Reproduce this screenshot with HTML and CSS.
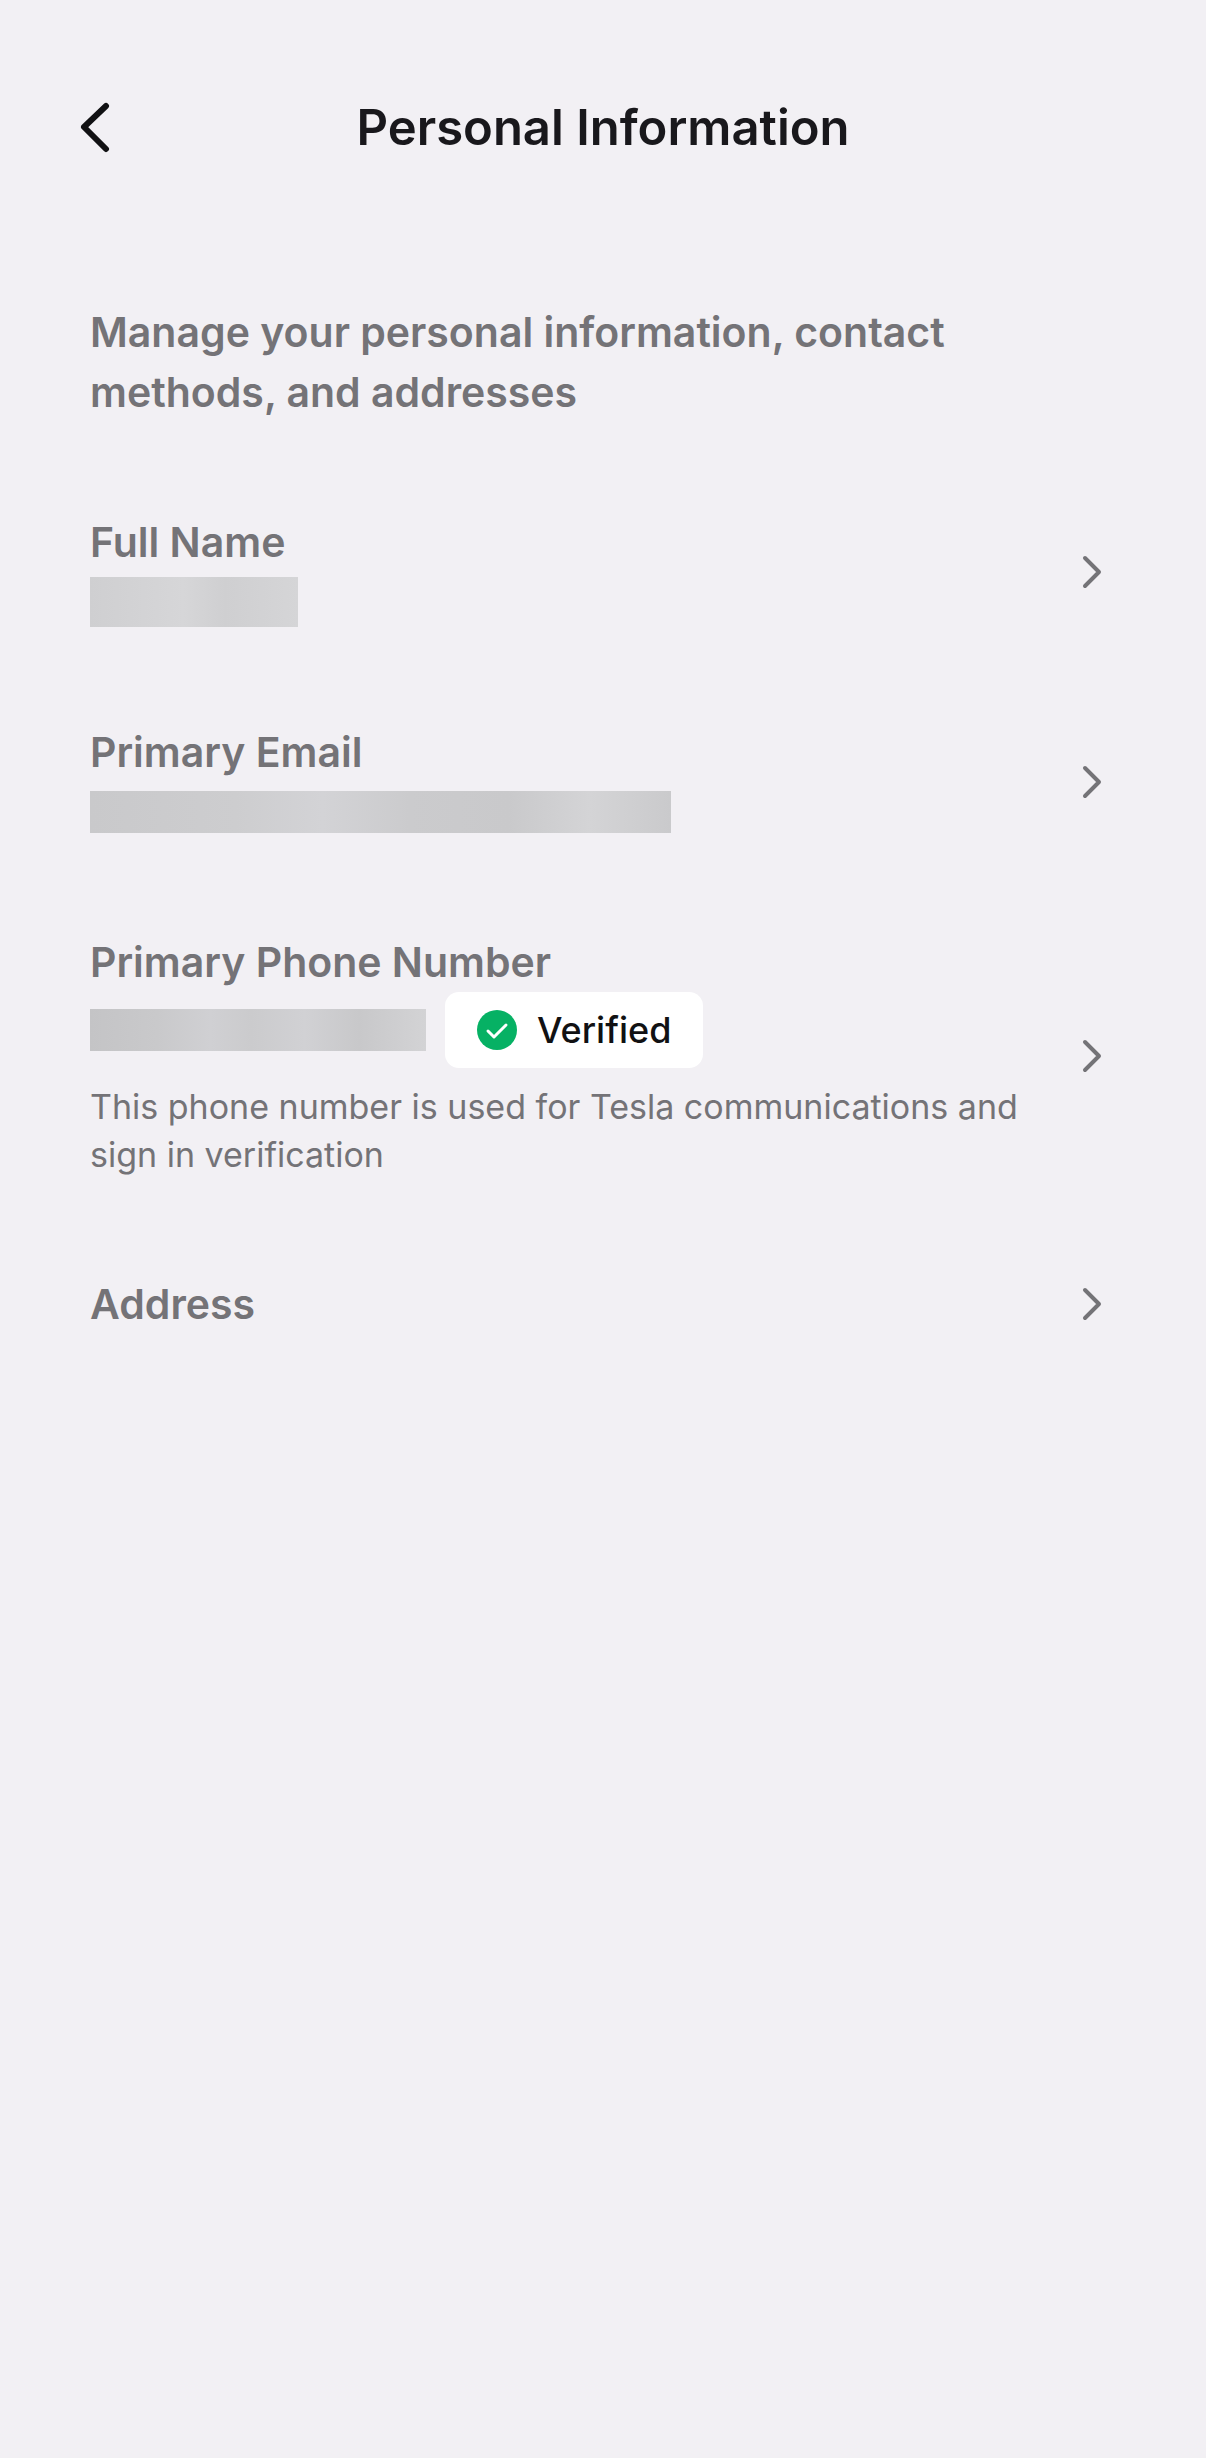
FILE: index.html
```
<!DOCTYPE html>
<html lang="en">
<head>
    <meta charset="UTF-8">
    <meta name="viewport" content="width=device-width, initial-scale=1.0">
    <title>Personal Information</title>
    <link rel="stylesheet" href="styles.css">
</head>
<body>
    <header class="header">
        <button class="back-button" type="button" aria-label="Back">
            <svg viewBox="0 0 32 52" width="32" height="52"><path d="M28 4 L6 25 L28 47"/></svg>
        </button>
        <h1>Personal Information</h1>
    </header>
    <main class="content">
        <p class="intro">Manage your personal information, contact methods, and addresses</p>
        <ul class="settings">
            <li>
                <a class="row" href="#name">
                    <span class="details">
                        <span class="label">Full Name</span>
                        <span class="value"><span class="redacted redacted-name"></span></span>
                    </span>
                    <svg class="chevron" viewBox="0 0 20 36" width="20" height="36"><path d="M3 4 L17 18 L3 32"/></svg>
                </a>
            </li>
            <li>
                <a class="row" href="#email">
                    <span class="details">
                        <span class="label">Primary Email</span>
                        <span class="value"><span class="redacted redacted-email"></span></span>
                    </span>
                    <svg class="chevron" viewBox="0 0 20 36" width="20" height="36"><path d="M3 4 L17 18 L3 32"/></svg>
                </a>
            </li>
            <li>
                <a class="row" href="#phone">
                    <span class="details">
                        <span class="label">Primary Phone Number</span>
                        <span class="value">
                            <span class="redacted redacted-phone"></span>
                            <span class="verified">
                                <svg viewBox="0 0 40 40" width="40" height="40"><circle cx="20" cy="20" r="20"/><path d="M11 21 L17 27 L29 15"/></svg>
                                Verified
                            </span>
                        </span>
                        <span class="note">This phone number is used for Tesla communications and sign in verification</span>
                    </span>
                    <svg class="chevron" viewBox="0 0 20 36" width="20" height="36"><path d="M3 4 L17 18 L3 32"/></svg>
                </a>
            </li>
            <li>
                <a class="row" href="#address">
                    <span class="details">
                        <span class="label">Address</span>
                    </span>
                    <svg class="chevron" viewBox="0 0 20 36" width="20" height="36"><path d="M3 4 L17 18 L3 32"/></svg>
                </a>
            </li>
        </ul>
    </main>
</body>
</html>
```
FILE: styles.css
```
* {
    box-sizing: border-box;
}
body {
    margin: 0;
    min-height: 100vh;
    background-color: #f2f0f4;
    color: #19181c;
    font-family: Inter, Arial, sans-serif;
}
.header {
    display: grid;
    grid-template-columns: 60px 1fr 60px;
    align-items: center;
    padding: 96px 72px 0;
}
.header h1 {
    margin: 0;
    font-size: 49px;
    line-height: 64px;
    font-weight: 600;
    text-align: center;
}
.back-button {
    display: flex;
    padding: 0 6px;
    border: none;
    background: none;
    cursor: pointer;
}
.back-button path {
    fill: none;
    stroke: #111113;
    stroke-width: 6;
    stroke-linecap: round;
    stroke-linejoin: round;
}
.content {
    padding: 142px 90px;
}
.intro {
    margin: 0;
    max-width: 900px;
    color: #747377;
    font-size: 41px;
    line-height: 60px;
    font-weight: 600;
}
.settings {
    list-style: none;
    margin: 90px 0 0;
    padding: 0;
    display: flex;
    flex-direction: column;
    gap: 90px;
}
.row {
    display: flex;
    align-items: center;
    justify-content: space-between;
    min-height: 70px;
    padding-right: 14px;
    color: #747377;
    text-decoration: none;
}
.details {
    display: flex;
    flex-direction: column;
    max-width: 960px;
}
.label {
    font-size: 41px;
    line-height: 60px;
    font-weight: 600;
}
.value {
    display: flex;
    align-items: center;
    gap: 19px;
    min-height: 60px;
}
.chevron {
    flex: none;
    fill: none;
    stroke: #747377;
    stroke-width: 4;
    stroke-linecap: round;
    stroke-linejoin: round;
}
/* Hidden personal values */
.redacted {
    height: 42px;
}
.redacted-name {
    width: 208px;
    height: 50px;
    background: linear-gradient(to right, #cfcfd1, #d6d6d8 45%, #cfcfd1 65%, #d5d5d7);
}
.redacted-email {
    width: 581px;
    background: linear-gradient(to right, #c9c9cb, #cdcdcf 25%, #d3d3d6 40%, #cbcbcd 55%, #c9c9cb 72%, #d4d4d6 86%, #cacacc);
}
.redacted-phone {
    width: 336px;
    background: linear-gradient(to right, #c4c4c6, #c9c9cb 20%, #d0d0d3 36%, #cbcbcd 48%, #d1d1d4 64%, #c8c8ca 80%, #d3d3d5);
}
.verified {
    display: flex;
    align-items: center;
    gap: 20px;
    padding: 0 32px;
    height: 76px;
    border-radius: 14px;
    background-color: #ffffff;
    color: #111113;
    font-size: 36px;
    font-weight: 500;
}
.verified circle {
    fill: #06b164;
}
.verified path {
    fill: none;
    stroke: #ffffff;
    stroke-width: 3;
    stroke-linecap: round;
    stroke-linejoin: round;
}
.note {
    margin-top: 15px;
    font-size: 34px;
    line-height: 48px;
}
```
